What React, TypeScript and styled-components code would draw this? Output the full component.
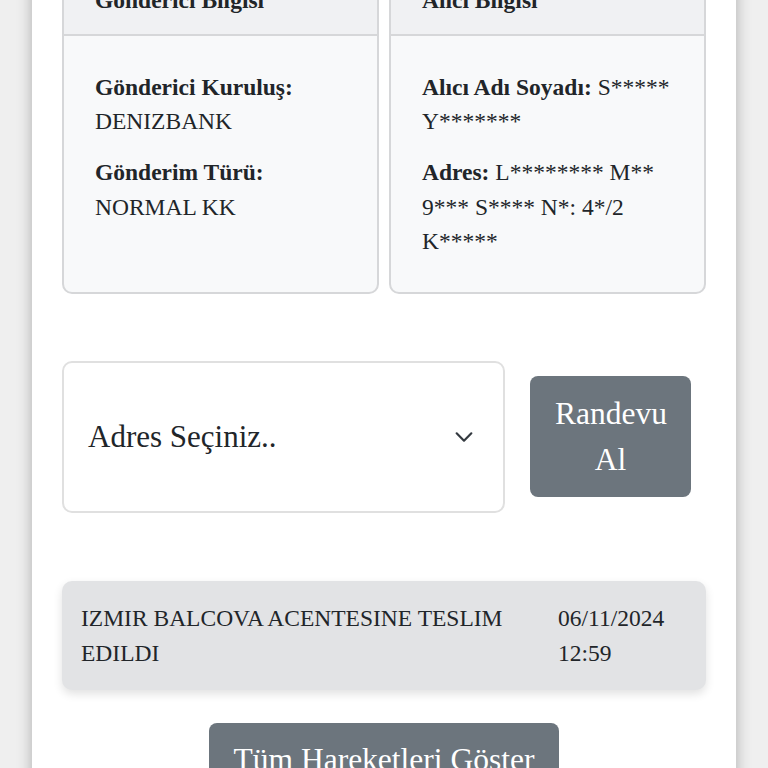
import styled, { createGlobalStyle } from "styled-components";

const GlobalStyle = createGlobalStyle`
  html, body {
    margin: 0;
    padding: 0;
    background: #efefef;
    font-family: "Liberation Serif", "Times New Roman", serif;
    color: #212529;
  }
  * {
    box-sizing: border-box;
  }
`;

const Page = styled.div`
  width: 704px;
  margin: -67px auto 0;
  min-height: 900px;
  background: #ffffff;
  padding: 30px;
  box-shadow: 0 0 14px rgba(0, 0, 0, 0.28);
`;

const InfoGrid = styled.div`
  display: grid;
  grid-template-columns: 1fr 1fr;
  gap: 10px;
`;

const InfoCard = styled.div`
  background: #f8f9fa;
  border: 2px solid #d6d7d9;
  border-radius: 10px;
  overflow: hidden;
  display: flex;
  flex-direction: column;
`;

const CardHeader = styled.div`
  background: #f0f1f3;
  border-bottom: 2px solid #d6d7d9;
  padding: 18px 31px 16px;
  font-size: 23.5px;
  line-height: 34.5px;
  font-weight: 700;
`;

const CardBody = styled.div`
  flex: 1;
  padding: 34px 31px 33px;
`;

const Field = styled.p`
  margin: 0 0 16.5px;
  font-size: 23.5px;
  line-height: 34.5px;

  &:last-child {
    margin-bottom: 0;
  }

  b {
    font-weight: 700;
  }
`;

const ActionRow = styled.div`
  display: flex;
  align-items: center;
  gap: 25px;
  padding-right: 15px;
  margin-top: 67px;
`;

const SelectBox = styled.div`
  flex: 1;
  height: 152px;
  display: flex;
  align-items: center;
  justify-content: space-between;
  padding: 0 28px 0 24px;
  background: #ffffff;
  border: 2px solid #e0e0e0;
  border-radius: 10px;
  font-size: 31px;
  color: #212529;

  svg {
    width: 22px;
    height: 22px;
  }
`;

const GrayButton = styled.button<{ $width?: number }>`
  width: ${({ $width }) => ($width ? `${$width}px` : "auto")};
  background: #6c757d;
  color: #ffffff;
  border: none;
  border-radius: 8px;
  font-family: "Liberation Serif", "Times New Roman", serif;
  font-size: 31.5px;
  line-height: 46px;
  padding: 14.5px 25px;
  text-align: center;
  cursor: pointer;
`;

const EventCard = styled.div`
  margin-top: 68px;
  display: grid;
  grid-template-columns: 1fr 128px;
  gap: 46px;
  background: #e2e3e5;
  border-radius: 10px;
  padding: 20px 20px 19px 19px;
  box-shadow: 0 4px 10px rgba(0, 0, 0, 0.12);
  font-size: 23.5px;
  line-height: 35px;
`;

const Center = styled.div`
  display: flex;
  justify-content: center;
  margin-top: 33px;
`;

function Chevron() {
  return (
    <svg viewBox="0 0 24 24" fill="none" stroke="#343a40" strokeWidth="2.4" strokeLinecap="round" strokeLinejoin="round">
      <path d="M4 8l8 8 8-8" />
    </svg>
  );
}

export default function App() {
  return (
    <>
      <GlobalStyle />
      <Page>
        <InfoGrid>
          <InfoCard>
            <CardHeader>Gönderici Bilgisi</CardHeader>
            <CardBody>
              <Field>
                <b>Gönderici Kuruluş:</b>
                <br />
                DENIZBANK
              </Field>
              <Field>
                <b>Gönderim Türü:</b>
                <br />
                NORMAL KK
              </Field>
            </CardBody>
          </InfoCard>
          <InfoCard>
            <CardHeader>Alıcı Bilgisi</CardHeader>
            <CardBody>
              <Field>
                <b>Alıcı Adı Soyadı:</b> S***** Y*******
              </Field>
              <Field>
                <b>Adres:</b> L******** M** 9*** S**** N*: 4*/2 K*****
              </Field>
            </CardBody>
          </InfoCard>
        </InfoGrid>

        <ActionRow>
          <SelectBox>
            <span>Adres Seçiniz..</span>
            <Chevron />
          </SelectBox>
          <GrayButton $width={161}>Randevu Al</GrayButton>
        </ActionRow>

        <EventCard>
          <div>IZMIR BALCOVA ACENTESINE TESLIM EDILDI</div>
          <div>06/11/2024 12:59</div>
        </EventCard>

        <Center>
          <GrayButton>Tüm Hareketleri Göster</GrayButton>
        </Center>
      </Page>
    </>
  );
}
